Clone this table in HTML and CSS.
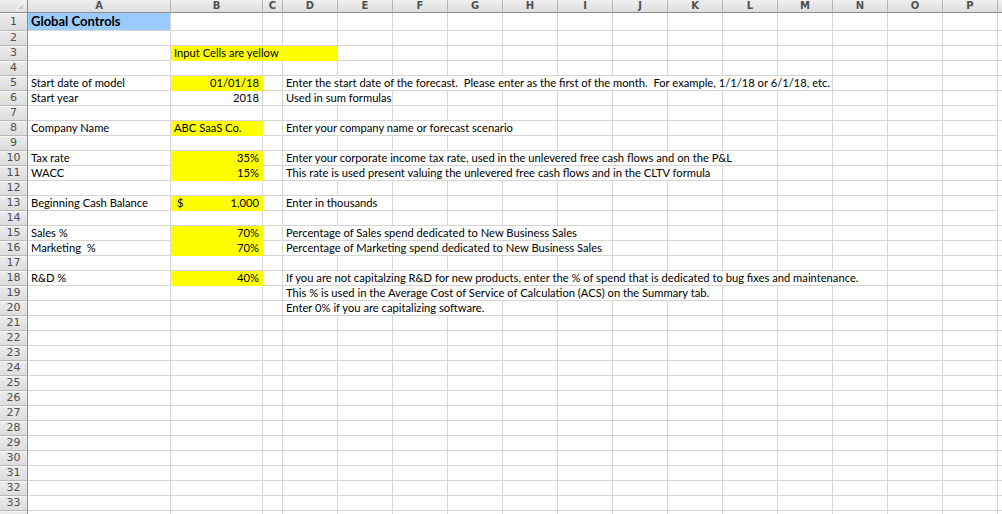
FILE: index.html
```html
<!DOCTYPE html>
<html>
<head>
<meta charset="utf-8">
<link rel="stylesheet" href="styles.css">
</head>
<body>
<div class="sheet">
  <div class="r hdr"><span class="corner"><svg width="10" height="10" viewBox="0 0 10 10"><polygon points="9,1 9,9 1,9" fill="#d2d2d2" stroke="#fff" stroke-width="0.8"/></svg></span><span>A</span><span>B</span><span>C</span><span>D</span><span>E</span><span>F</span><span>G</span><span>H</span><span>I</span><span>J</span><span>K</span><span>L</span><span>M</span><span>N</span><span>O</span><span>P</span><span></span></div>
  <div class="r r1"><span class="n">1</span><span class="blue title">Global Controls</span><span></span><span></span><span></span><span></span><span></span><span></span><span></span><span></span><span></span><span></span><span></span><span></span><span></span><span></span><span></span><span></span></div>
  <div class="r"><span class="n">2</span><span></span><span></span><span></span><span></span><span></span><span></span><span></span><span></span><span></span><span></span><span></span><span></span><span></span><span></span><span></span><span></span><span></span></div>
  <div class="r"><span class="n">3</span><span></span><span class="yel s3">Input Cells are yellow</span><span></span><span></span><span></span><span></span><span></span><span></span><span></span><span></span><span></span><span></span><span></span><span></span><span></span></div>
  <div class="r"><span class="n">4</span><span></span><span></span><span></span><span></span><span></span><span></span><span></span><span></span><span></span><span></span><span></span><span></span><span></span><span></span><span></span><span></span><span></span></div>
  <div class="r"><span class="n">5</span><span>Start date of model</span><span class="yel num">01/01/18</span><span></span><span class="s10">Enter the start date of the forecast.&nbsp; Please enter as the first of the month.&nbsp; For example, 1/1/18 or 6/1/18, etc.</span><span></span><span></span><span></span><span></span></div>
  <div class="r"><span class="n">6</span><span>Start year</span><span class="num">2018</span><span></span><span class="s2">Used in sum formulas</span><span></span><span></span><span></span><span></span><span></span><span></span><span></span><span></span><span></span><span></span><span></span></div>
  <div class="r"><span class="n">7</span><span></span><span></span><span></span><span></span><span></span><span></span><span></span><span></span><span></span><span></span><span></span><span></span><span></span><span></span><span></span><span></span><span></span></div>
  <div class="r"><span class="n">8</span><span>Company Name</span><span class="yel">ABC SaaS Co.</span><span></span><span class="s5">Enter your company name or forecast scenario</span><span></span><span></span><span></span><span></span><span></span><span></span><span></span><span></span></div>
  <div class="r"><span class="n">9</span><span></span><span></span><span></span><span></span><span></span><span></span><span></span><span></span><span></span><span></span><span></span><span></span><span></span><span></span><span></span><span></span><span></span></div>
  <div class="r"><span class="n">10</span><span>Tax rate</span><span class="yel num">35%</span><span></span><span class="s9">Enter your corporate income tax rate, used in the unlevered free cash flows and on the P&amp;L</span><span></span><span></span><span></span><span></span><span></span></div>
  <div class="r"><span class="n">11</span><span>WACC</span><span class="yel num">15%</span><span></span><span class="s8">This rate is used present valuing the unlevered free cash flows and in the CLTV formula</span><span></span><span></span><span></span><span></span><span></span><span></span></div>
  <div class="r"><span class="n">12</span><span></span><span></span><span></span><span></span><span></span><span></span><span></span><span></span><span></span><span></span><span></span><span></span><span></span><span></span><span></span><span></span><span></span></div>
  <div class="r"><span class="n">13</span><span>Beginning Cash Balance</span><span class="yel cur"><em>$</em><em>1,000</em></span><span></span><span class="s2">Enter in thousands</span><span></span><span></span><span></span><span></span><span></span><span></span><span></span><span></span><span></span><span></span><span></span></div>
  <div class="r"><span class="n">14</span><span></span><span></span><span></span><span></span><span></span><span></span><span></span><span></span><span></span><span></span><span></span><span></span><span></span><span></span><span></span><span></span><span></span></div>
  <div class="r"><span class="n">15</span><span>Sales %</span><span class="yel num">70%</span><span></span><span class="s6">Percentage of Sales spend dedicated to New Business Sales</span><span></span><span></span><span></span><span></span><span></span><span></span><span></span><span></span></div>
  <div class="r"><span class="n">16</span><span>Marketing&nbsp; %</span><span class="yel num">70%</span><span></span><span class="s6">Percentage of Marketing spend dedicated to New Business Sales</span><span></span><span></span><span></span><span></span><span></span><span></span><span></span><span></span></div>
  <div class="r"><span class="n">17</span><span></span><span></span><span></span><span></span><span></span><span></span><span></span><span></span><span></span><span></span><span></span><span></span><span></span><span></span><span></span><span></span><span></span></div>
  <div class="r"><span class="n">18</span><span>R&amp;D %</span><span class="yel num">40%</span><span></span><span class="s11">If you are not capitalzing R&amp;D for new products, enter the % of spend that is dedicated to bug fixes and maintenance.</span><span></span><span></span><span></span></div>
  <div class="r"><span class="n">19</span><span></span><span></span><span></span><span class="s8">This % is used in the Average Cost of Service of Calculation (ACS) on the Summary tab.</span><span></span><span></span><span></span><span></span><span></span><span></span></div>
  <div class="r"><span class="n">20</span><span></span><span></span><span></span><span class="s4">Enter 0% if you are capitalizing software.</span><span></span><span></span><span></span><span></span><span></span><span></span><span></span><span></span><span></span><span></span></div>
  <div class="r"><span class="n">21</span><span></span><span></span><span></span><span></span><span></span><span></span><span></span><span></span><span></span><span></span><span></span><span></span><span></span><span></span><span></span><span></span><span></span></div>
  <div class="r"><span class="n">22</span><span></span><span></span><span></span><span></span><span></span><span></span><span></span><span></span><span></span><span></span><span></span><span></span><span></span><span></span><span></span><span></span><span></span></div>
  <div class="r"><span class="n">23</span><span></span><span></span><span></span><span></span><span></span><span></span><span></span><span></span><span></span><span></span><span></span><span></span><span></span><span></span><span></span><span></span><span></span></div>
  <div class="r"><span class="n">24</span><span></span><span></span><span></span><span></span><span></span><span></span><span></span><span></span><span></span><span></span><span></span><span></span><span></span><span></span><span></span><span></span><span></span></div>
  <div class="r"><span class="n">25</span><span></span><span></span><span></span><span></span><span></span><span></span><span></span><span></span><span></span><span></span><span></span><span></span><span></span><span></span><span></span><span></span><span></span></div>
  <div class="r"><span class="n">26</span><span></span><span></span><span></span><span></span><span></span><span></span><span></span><span></span><span></span><span></span><span></span><span></span><span></span><span></span><span></span><span></span><span></span></div>
  <div class="r"><span class="n">27</span><span></span><span></span><span></span><span></span><span></span><span></span><span></span><span></span><span></span><span></span><span></span><span></span><span></span><span></span><span></span><span></span><span></span></div>
  <div class="r"><span class="n">28</span><span></span><span></span><span></span><span></span><span></span><span></span><span></span><span></span><span></span><span></span><span></span><span></span><span></span><span></span><span></span><span></span><span></span></div>
  <div class="r"><span class="n">29</span><span></span><span></span><span></span><span></span><span></span><span></span><span></span><span></span><span></span><span></span><span></span><span></span><span></span><span></span><span></span><span></span><span></span></div>
  <div class="r"><span class="n">30</span><span></span><span></span><span></span><span></span><span></span><span></span><span></span><span></span><span></span><span></span><span></span><span></span><span></span><span></span><span></span><span></span><span></span></div>
  <div class="r"><span class="n">31</span><span></span><span></span><span></span><span></span><span></span><span></span><span></span><span></span><span></span><span></span><span></span><span></span><span></span><span></span><span></span><span></span><span></span></div>
  <div class="r"><span class="n">32</span><span></span><span></span><span></span><span></span><span></span><span></span><span></span><span></span><span></span><span></span><span></span><span></span><span></span><span></span><span></span><span></span><span></span></div>
  <div class="r"><span class="n">33</span><span></span><span></span><span></span><span></span><span></span><span></span><span></span><span></span><span></span><span></span><span></span><span></span><span></span><span></span><span></span><span></span><span></span></div>
  <div class="r"><span class="n"></span><span></span><span></span><span></span><span></span><span></span><span></span><span></span><span></span><span></span><span></span><span></span><span></span><span></span><span></span><span></span><span></span><span></span></div>
</div>
</body>
</html>
```

FILE: styles.css
```css
html, body {
  margin: 0;
  padding: 0;
  background: #fff;
  overflow: hidden;
}

.sheet {
  width: 1002px;
  height: 514px;
  overflow: hidden;
  font-family: "Lato", "Liberation Sans", sans-serif;
  font-size: 11.2px;
  color: #000;
}

.r {
  display: grid;
  grid-template-columns: 28px 143px 92px 20px repeat(13, 55px) 1fr;
  height: 15px;
}

.r > span {
  box-sizing: border-box;
  border-right: 1px solid #d6d6d6;
  border-bottom: 1px solid #d6d6d6;
  line-height: 14px;
  padding: 0 3px;
  white-space: nowrap;
  overflow: hidden;
}

.r > span.n {
  background: linear-gradient(#ececec, #dddddd);
  border-right: 1px solid #8e8e8e;
  border-bottom: 1px solid #b9b9b9;
  box-shadow: inset 0 1px 0 #f6f6f6;
  color: #505050;
  text-align: center;
  padding: 0;
  font-family: "DejaVu Sans", sans-serif;
  font-size: 11px;
}

.hdr {
  height: 13px;
}

.hdr > span {
  background: linear-gradient(#efefef, #dedede);
  border-right: 1px solid #b4b4b4;
  border-bottom: 1px solid #8e8e8e;
  line-height: 12px;
  text-align: center;
  color: #505050;
  font-family: "DejaVu Sans", sans-serif;
  font-weight: bold;
  font-size: 10px;
}

.hdr > span.corner {
  border-right: 1px solid #8e8e8e;
  position: relative;
}

.corner svg {
  position: absolute;
  right: 2px;
  bottom: 1px;
}

.r1 {
  height: 18px;
}

.r1 > span {
  line-height: 17px;
}

.blue {
  background: #99cbff;
}

.title {
  font-weight: bold;
  font-size: 13px;
}

.yel {
  background: #ffff00;
  border-right-color: #ffff00 !important;
  border-bottom-color: #ffff00 !important;
}

.num {
  text-align: right;
}

.cur {
  display: flex;
  justify-content: space-between;
  padding: 0 3px 0 6px !important;
}

.cur em {
  font-style: normal;
}

.s2 { grid-column: span 2; }
.s3 { grid-column: span 3; }
.s4 { grid-column: span 4; }
.s5 { grid-column: span 5; }
.s6 { grid-column: span 6; }
.s7 { grid-column: span 7; }
.s8 { grid-column: span 8; }
.s9 { grid-column: span 9; }
.s10 { grid-column: span 10; }
.s11 { grid-column: span 11; }
```
